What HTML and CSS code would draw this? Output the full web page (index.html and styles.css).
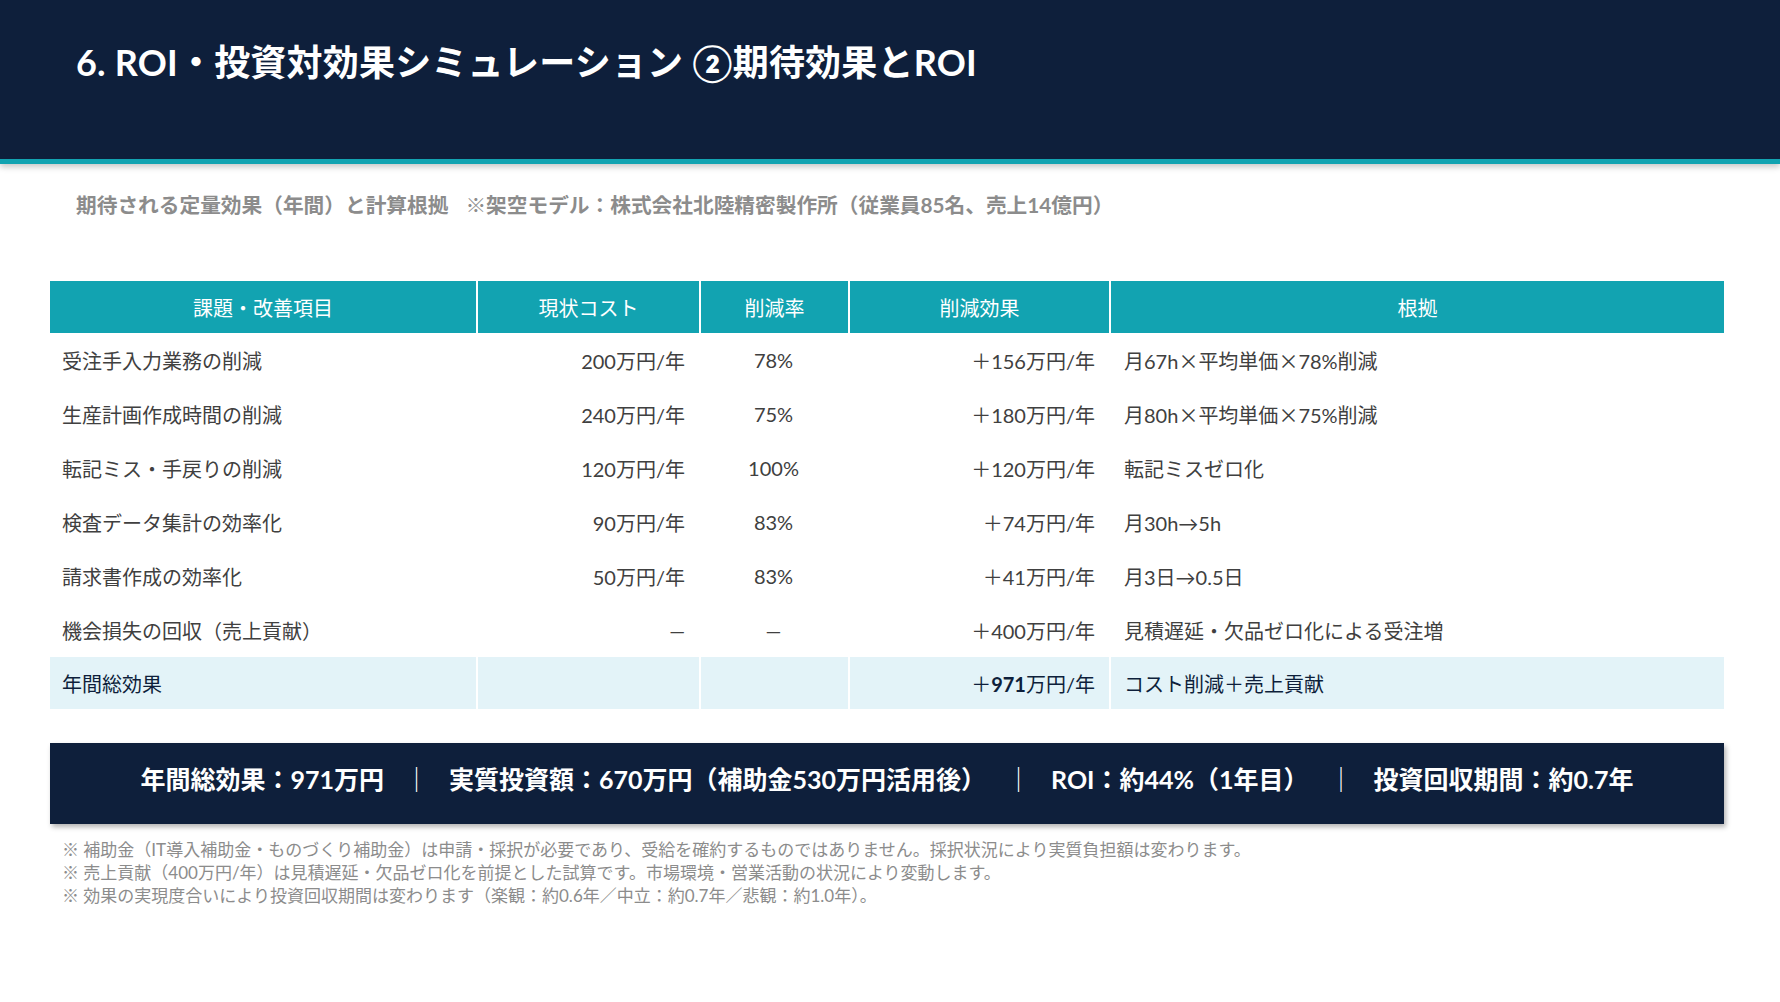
FILE: index.html
```html
<!DOCTYPE html>
<html lang="ja">
<head>
<meta charset="utf-8">
<title>6. ROI・投資対効果シミュレーション ②期待効果とROI</title>
<link rel="stylesheet" href="styles.css">
</head>
<body>
<header class="slide-header">
  <h1 class="slide-title">6. ROI・投資対効果シミュレーション ②期待効果とROI</h1>
</header>
<main class="content">
  <p class="subtitle">期待される定量効果（年間）と計算根拠<span class="gap"></span>※架空モデル：株式会社北陸精密製作所（従業員85名、売上14億円）</p>

  <table class="effect-table">
    <colgroup>
      <col class="c1"><col class="c2"><col class="c3"><col class="c4"><col class="c5">
    </colgroup>
    <thead>
      <tr>
        <th>課題・改善項目</th>
        <th>現状コスト</th>
        <th>削減率</th>
        <th>削減効果</th>
        <th>根拠</th>
      </tr>
    </thead>
    <tbody>
      <tr>
        <td class="item">受注手入力業務の削減</td>
        <td class="num">200万円/年</td>
        <td class="rate">78%</td>
        <td class="num">＋156万円/年</td>
        <td class="basis">月67h<span class="cjk">×</span>平均単価<span class="cjk">×</span>78%削減</td>
      </tr>
      <tr>
        <td class="item">生産計画作成時間の削減</td>
        <td class="num">240万円/年</td>
        <td class="rate">75%</td>
        <td class="num">＋180万円/年</td>
        <td class="basis">月80h<span class="cjk">×</span>平均単価<span class="cjk">×</span>75%削減</td>
      </tr>
      <tr>
        <td class="item">転記ミス・手戻りの削減</td>
        <td class="num">120万円/年</td>
        <td class="rate">100%</td>
        <td class="num">＋120万円/年</td>
        <td class="basis">転記ミスゼロ化</td>
      </tr>
      <tr>
        <td class="item">検査データ集計の効率化</td>
        <td class="num">90万円/年</td>
        <td class="rate">83%</td>
        <td class="num">＋74万円/年</td>
        <td class="basis">月30h→5h</td>
      </tr>
      <tr>
        <td class="item">請求書作成の効率化</td>
        <td class="num">50万円/年</td>
        <td class="rate">83%</td>
        <td class="num">＋41万円/年</td>
        <td class="basis">月3日→0.5日</td>
      </tr>
      <tr>
        <td class="item">機会損失の回収（売上貢献）</td>
        <td class="num">—</td>
        <td class="rate">—</td>
        <td class="num">＋400万円/年</td>
        <td class="basis">見積遅延・欠品ゼロ化による受注増</td>
      </tr>
      <tr class="total">
        <td class="item">年間総効果</td>
        <td class="num"></td>
        <td class="rate"></td>
        <td class="num">＋<strong>971</strong>万円/年</td>
        <td class="basis">コスト削減＋売上貢献</td>
      </tr>
    </tbody>
  </table>

  <div class="summary">
    <span>年間総効果：971万円</span>
    <span class="sep">｜</span>
    <span>実質投資額：670万円（補助金530万円活用後）</span>
    <span class="sep">｜</span>
    <span>ROI：約44%（1年目）</span>
    <span class="sep">｜</span>
    <span>投資回収期間：約0.7年</span>
  </div>

  <ul class="notes">
    <li>※ 補助金（IT導入補助金・ものづくり補助金）は申請・採択が必要であり、受給を確約するものではありません。採択状況により実質負担額は変わります。</li>
    <li>※ 売上貢献（400万円/年）は見積遅延・欠品ゼロ化を前提とした試算です。市場環境・営業活動の状況により変動します。</li>
    <li>※ 効果の実現度合いにより投資回収期間は変わります（楽観：約0.6年／中立：約0.7年／悲観：約1.0年）。</li>
  </ul>
</main>
</body>
</html>
```

FILE: styles.css
```css
* { box-sizing: border-box; }

html, body {
  margin: 0;
  padding: 0;
  background: #ffffff;
}

body {
  width: 1780px;
  height: 1002px;
  overflow: hidden;
  font-family: Lato, "Noto Sans CJK JP", sans-serif;
  color: #404040;
}

.cjk {
  font-family: "Noto Sans CJK JP", sans-serif;
}

.slide-header {
  position: relative;
  z-index: 1;
  height: 164px;
  background: #0e1f3b;
  border-bottom: 5px solid #12a3b1;
  box-shadow: 0 3px 6px rgba(0, 0, 0, 0.22);
  padding: 37px 0 0 76px;
}

.slide-title {
  margin: 0;
  font-size: 36px;
  line-height: 50px;
  font-weight: 700;
  color: #ffffff;
  letter-spacing: 0.2px;
}

.content {
  padding: 0 56px 0 50px;
}

.subtitle {
  margin: 26px 0 0 26px;
  font-size: 20.7px;
  line-height: 30px;
  font-weight: 700;
  color: #8c8c8c;
  white-space: nowrap;
}

.subtitle .gap {
  display: inline-block;
  width: 17px;
}

.effect-table {
  margin-top: 61px;
  width: 1674px;
  table-layout: fixed;
  border-collapse: separate;
  border-spacing: 0;
  font-size: 20px;
}

.effect-table col.c1 { width: 428px; }
.effect-table col.c2 { width: 223px; }
.effect-table col.c3 { width: 149px; }
.effect-table col.c4 { width: 261px; }
.effect-table col.c5 { width: 613px; }

.effect-table th {
  height: 52px;
  padding: 0 13px;
  background: #12a3b1;
  color: #ffffff;
  font-weight: 400;
  text-align: center;
  vertical-align: middle;
  border-right: 2px solid #ffffff;
}

.effect-table td {
  height: 54px;
  padding: 0 14px 0 12px;
  vertical-align: middle;
  white-space: nowrap;
  border-right: 2px solid #ffffff;
}

.effect-table th:last-child,
.effect-table td:last-child {
  border-right: 0;
}

.effect-table td.num { text-align: right; }
.effect-table td.rate { text-align: center; }
.effect-table td.basis { text-align: left; padding-left: 13px; }

.effect-table tr.total td {
  height: 52px;
  background: #e3f3f8;
  color: #0e1f3b;
}

.effect-table tr.total strong {
  font-weight: 700;
}

.summary {
  margin-top: 34px;
  height: 81px;
  padding-bottom: 12px;
  background: #0e1f3b;
  box-shadow: 2px 3px 5px rgba(0, 0, 0, 0.3);
  display: flex;
  align-items: center;
  justify-content: center;
  gap: 20px;
  color: #ffffff;
  font-size: 25px;
  font-weight: 700;
  white-space: nowrap;
}

.summary .sep {
  font-weight: 400;
}

.notes {
  list-style: none;
  margin: 14px 0 0 12px;
  padding: 0;
  font-size: 17px;
  line-height: 23px;
  color: #8c8c8c;
}

.notes li {
  white-space: nowrap;
}
```
